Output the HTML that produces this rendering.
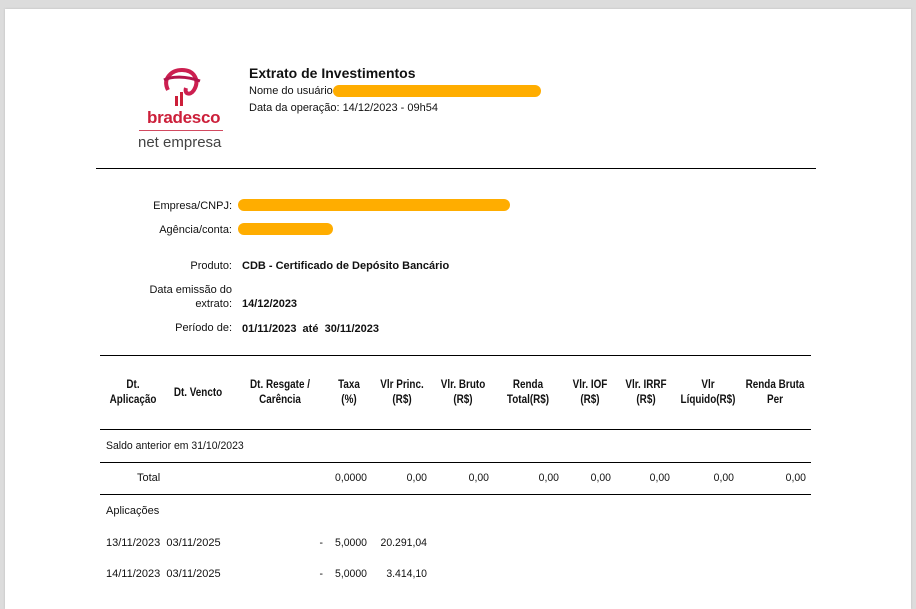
<!DOCTYPE html>
<html><head><meta charset="utf-8"><style>
body{margin:0;width:916px;height:597px;background:#dcdcdc;overflow:hidden;font-family:"Liberation Sans",Arial,sans-serif;color:#111}
#pg{position:absolute;left:5px;top:9px;width:906px;height:600px;background:#fff;box-shadow:0 0 2px #bbb}
.a{position:absolute;white-space:nowrap;font-size:11px}
.c{position:absolute;text-align:center;white-space:nowrap;font-size:11.5px;font-weight:bold;line-height:15px;transform:translateX(-50%) scaleX(.86)}
.r{position:absolute;white-space:nowrap;font-size:11px;transform:translateX(-100%) scaleX(.95);transform-origin:right}
.hl{position:absolute;height:1px;background:#000}
.o{position:absolute;background:#ffad00;border-radius:6px;height:12px}
.l{position:absolute;font-size:11px;text-align:right;white-space:nowrap}
</style></head><body>
<div id="pg"></div>
<svg style="position:absolute;left:160px;top:66px" width="46" height="42" viewBox="0 0 46 42">
<path d="M8 24 C2 12 12 4 22 4 C34 4 40 14 34 24 C30 30 24 28 26 22" fill="none" stroke="#cc1f50" stroke-width="4"/>
<path d="M4 14 C12 10 26 10 40 15" fill="none" stroke="#b3144a" stroke-width="3"/>
<rect x="15" y="30" width="3" height="10" fill="#cc1f3a"/><rect x="20" y="26" width="3" height="14" fill="#cc1f3a"/>
</svg>
<div class="a" style="left:147px;top:108px;font-size:17px;font-weight:bold;color:#cc1f3a;letter-spacing:-.3px">bradesco</div>
<div style="position:absolute;left:139px;top:130px;width:84px;height:1px;background:#d24a60"></div>
<div class="a" style="left:138px;top:134px;font-size:15px;color:#444">net empresa</div>
<div class="a" style="left:249px;top:65px;font-size:14px;font-weight:bold">Extrato de Investimentos</div>
<div class="a" style="left:249px;top:85px">Nome do usuário</div>
<div class="o" style="left:333px;top:85px;width:208px"></div>
<div class="a" style="left:249px;top:102px">Data da operação: 14/12/2023 - 09h54</div>
<div class="hl" style="left:96px;top:168px;width:720px"></div>
<div class="l" style="right:684px;top:200px">Empresa/CNPJ:</div>
<div class="o" style="left:238px;top:199px;width:272px"></div>
<div class="l" style="right:684px;top:224px">Agência/conta:</div>
<div class="o" style="left:238px;top:223px;width:95px"></div>
<div class="l" style="right:684px;top:260px">Produto:</div>
<div class="a" style="left:242px;top:260px;font-weight:bold">CDB - Certificado de Depósito Bancário</div>
<div class="l" style="right:684px;top:283px;line-height:14px">Data emissão do<br>extrato:</div>
<div class="a" style="left:242px;top:298px;font-weight:bold">14/12/2023</div>
<div class="l" style="right:684px;top:322px">Período de:</div>
<div class="a" style="left:242px;top:323px;font-weight:bold">01/11/2023 &nbsp;até &nbsp;30/11/2023</div>
<div class="hl" style="left:100px;top:355px;width:711px"></div>
<div class="c" style="left:133px;top:378px">Dt.<br>Aplicação</div>
<div class="c" style="left:198px;top:386px">Dt. Vencto</div>
<div class="c" style="left:280px;top:378px">Dt. Resgate /<br>Carência</div>
<div class="c" style="left:349px;top:378px">Taxa<br>(%)</div>
<div class="c" style="left:402px;top:378px">Vlr Princ.<br>(R$)</div>
<div class="c" style="left:463px;top:378px">Vlr. Bruto<br>(R$)</div>
<div class="c" style="left:528px;top:378px">Renda<br>Total(R$)</div>
<div class="c" style="left:590px;top:378px">Vlr. IOF<br>(R$)</div>
<div class="c" style="left:646px;top:378px">Vlr. IRRF<br>(R$)</div>
<div class="c" style="left:708px;top:378px">Vlr<br>Líquido(R$)</div>
<div class="c" style="left:775px;top:378px">Renda Bruta<br>Per</div>
<div class="hl" style="left:100px;top:429px;width:711px"></div>
<div class="a" style="left:106px;top:440px;transform:scaleX(.95);transform-origin:left">Saldo anterior em 31/10/2023</div>
<div class="hl" style="left:100px;top:462px;width:711px"></div>
<div class="a" style="left:137px;top:472px">Total</div>
<div class="r" style="left:367px;top:472px">0,0000</div>
<div class="r" style="left:427px;top:472px">0,00</div>
<div class="r" style="left:489px;top:472px">0,00</div>
<div class="r" style="left:559px;top:472px">0,00</div>
<div class="r" style="left:611px;top:472px">0,00</div>
<div class="r" style="left:670px;top:472px">0,00</div>
<div class="r" style="left:734px;top:472px">0,00</div>
<div class="r" style="left:806px;top:472px">0,00</div>
<div class="hl" style="left:100px;top:494px;width:711px"></div>
<div class="a" style="left:106px;top:505px">Aplicações</div>
<div class="a" style="left:106px;top:537px">13/11/2023 &nbsp;03/11/2025</div>
<div class="r" style="left:323px;top:537px">-</div>
<div class="r" style="left:367px;top:537px">5,0000</div>
<div class="r" style="left:427px;top:537px">20.291,04</div>
<div class="a" style="left:106px;top:568px">14/11/2023 &nbsp;03/11/2025</div>
<div class="r" style="left:323px;top:568px">-</div>
<div class="r" style="left:367px;top:568px">5,0000</div>
<div class="r" style="left:427px;top:568px">3.414,10</div>
</body></html>
